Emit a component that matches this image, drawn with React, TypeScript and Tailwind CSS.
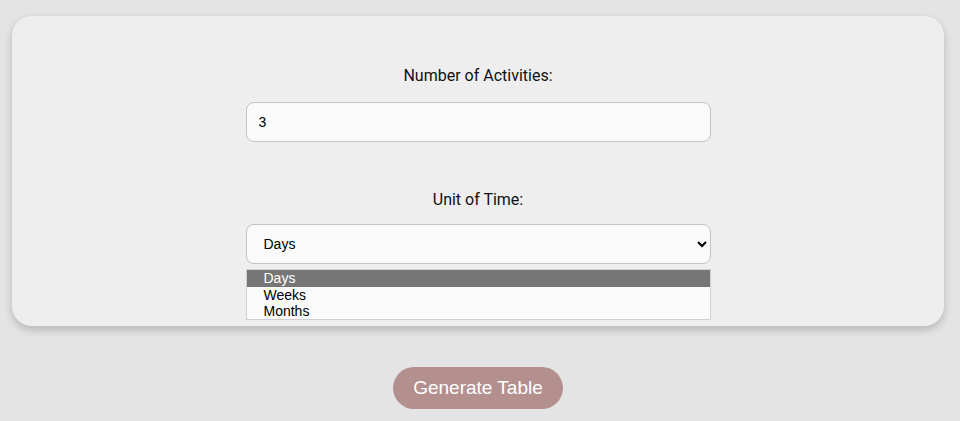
import React, { useState } from 'react';

const units = ['Days', 'Weeks', 'Months'];

export default function App() {
  const [count, setCount] = useState('3');
  const [unit, setUnit] = useState('Days');

  return (
    <div className="min-h-[421px] bg-[#e4e4e4] pt-4 pl-3 pr-4 font-['Roboto',sans-serif] text-[#111]">
      <div className="rounded-[20px] bg-[#eeeeee] shadow-[0_4px_8px_rgba(0,0,0,0.2)] pt-[48px] pb-[6px] flex flex-col items-center">
        <label className="text-base leading-6">Number of Activities:</label>
        <input
          type="number"
          value={count}
          onChange={(e) => setCount(e.target.value)}
          className="mt-[14px] w-[465px] h-[40px] rounded-lg border border-[#c4c4c4] bg-[#fafafa] px-3 text-[14px] font-['Liberation_Sans',Arial,sans-serif] text-black outline-none [appearance:textfield]"
        />

        <label className="mt-[46px] text-base leading-6">Unit of Time:</label>
        <select
          value={unit}
          onChange={(e) => setUnit(e.target.value)}
          className="mt-[12px] w-[465px] h-[40px] rounded-lg border border-[#c4c4c4] bg-[#fafafa] pl-[13px] pr-1 text-[14px] font-['Liberation_Sans',Arial,sans-serif] text-black outline-none"
        >
          {units.map((u) => (
            <option key={u}>{u}</option>
          ))}
        </select>

        {/* open dropdown list */}
        <ul className="mt-[5px] w-[465px] border border-[#d0d0d0] bg-[#fafafa] font-['Liberation_Sans',Arial,sans-serif] text-[14px] leading-[16px] text-black">
          {units.map((u) => (
            <li
              key={u}
              onClick={() => setUnit(u)}
              className={u === unit ? 'pl-[17px] bg-[#767676] text-white h-[17px]' : 'pl-[17px] h-[16px]'}
            >
              {u}
            </li>
          ))}
        </ul>
      </div>

      <div className="flex justify-center mt-[41px]">
        <button className="h-[42px] w-[170px] rounded-full bg-[#b3908e] text-white text-[19px] font-['Liberation_Sans',Arial,sans-serif]">
          Generate Table
        </button>
      </div>
    </div>
  );
}
